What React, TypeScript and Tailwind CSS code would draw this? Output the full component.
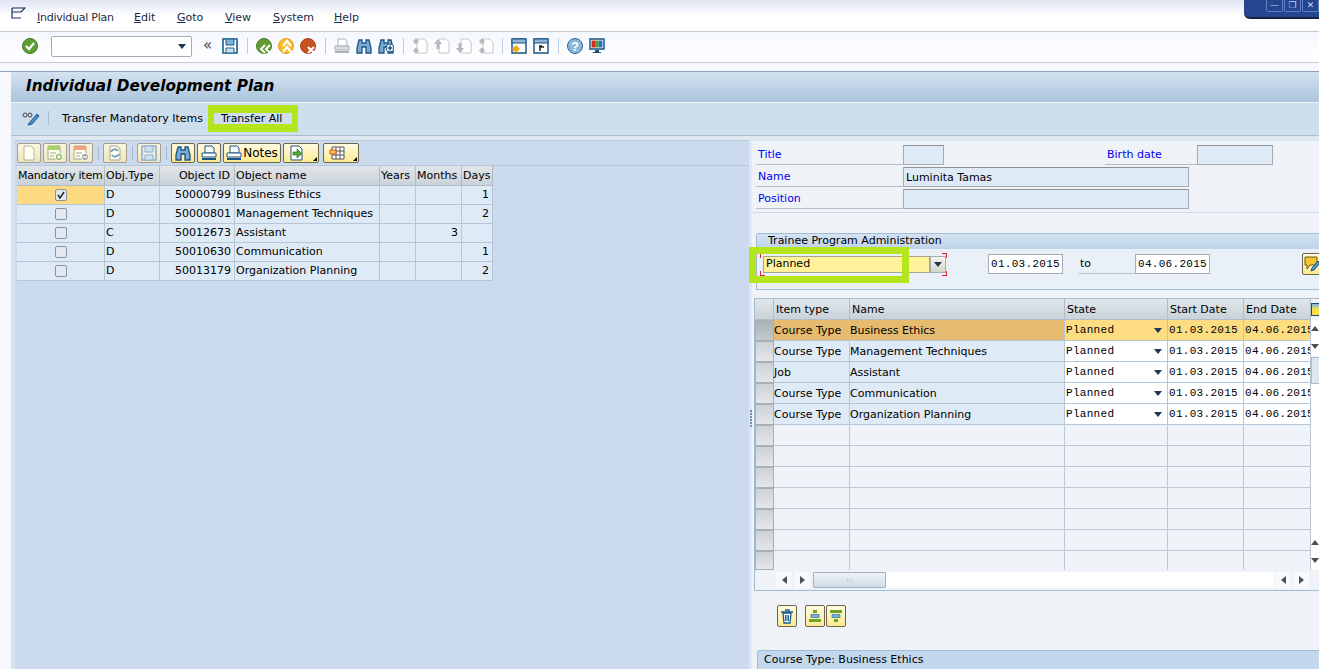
import type { ReactNode } from "react";

const ui = "font-['DejaVu_Sans',sans-serif] text-[11px] leading-none text-black";
const mono = "font-['Liberation_Mono',monospace] text-[11px] tracking-[0.3px]";

function Svg({ w = 16, h = 16, children }: { w?: number; h?: number; children: ReactNode }) {
  return (
    <svg width={w} height={h} viewBox={`0 0 ${w} ${h}`} className="shrink-0">
      {children}
    </svg>
  );
}

const CheckIcon = () => (
  <Svg>
    <circle cx="8" cy="8" r="7.5" fill="#5f9e34" stroke="#3f7a24" />
    <path d="M4 8l3 3 5-6" fill="none" stroke="#fff" strokeWidth="2.2" />
  </Svg>
);
const SaveIcon = ({ dim }: { dim?: boolean }) => {
  const c = dim ? "#8fb0c6" : "#17608f";
  return (
    <Svg>
      <path d="M1 1h14v14H1z" fill={dim ? "#e6eef0" : "#fff"} stroke={c} strokeWidth="1.6" />
      <path d="M4 1h8v6H4z" fill={dim ? "#cfe0e8" : "#7fb0d6"} stroke={c} />
      <path d="M4 10h8v5H4z" fill="#cfe0ee" stroke={c} />
    </Svg>
  );
};
const Round = ({ fill, edge, mark }: { fill: string; edge: string; mark: ReactNode }) => (
  <Svg>
    <circle cx="8" cy="8" r="7.5" fill={fill} stroke={edge} />
    {mark}
  </Svg>
);
const BackIcon = () => (
  <Round
    fill="#5f9b2f"
    edge="#4a7f24"
    mark={<path d="M9 7l-4 4 4 4M14 7l-4 4 4 4" fill="none" stroke="#fff" strokeWidth="2" />}
  />
);
const UpIcon = () => (
  <Round
    fill="#f7bd2c"
    edge="#e79a17"
    mark={<path d="M5 8l4-5 4 5M5 14l4-5 4 5" fill="none" stroke="#fff" strokeWidth="2.2" />}
  />
);
const CancelIcon = () => (
  <Round
    fill="#c9511f"
    edge="#a83f16"
    mark={<path d="M8 9l6 6M14 9l-6 6" fill="none" stroke="#fff" strokeWidth="2.2" />}
  />
);
const PrintIcon = ({ c = "#a9b2b8", fill = "#d9dee1" }: { c?: string; fill?: string }) => (
  <Svg>
    <path d="M4 1h7l2 2v5H4z" fill="#fff" stroke={c} />
    <path d="M1 8h14v4H1z" fill={fill} stroke={c} />
    <path d="M1 13h14v2H1z" fill={c} />
  </Svg>
);
const BinocIcon = ({ plus }: { plus?: boolean }) => (
  <Svg>
    <path
      d="M3 2h3v3h4V2h3l2 8v5h-5V9H6v6H1v-5z"
      fill="#7daad2"
      stroke="#1a5488"
      strokeWidth="1.3"
    />
    {plus && (
      <>
        <circle cx="12" cy="10" r="4" fill="#fff" stroke="#1a5488" />
        <path d="M9.5 10h5M12 7.5v5" stroke="#1a5488" strokeWidth="1.5" />
      </>
    )}
  </Svg>
);
const PageArrow = ({ d }: { d: string }) => (
  <Svg>
    <path d="M5 1h7l3 3v11H5z" fill="#fff" stroke="#c4c8cb" />
    <path d={d} fill="#b4b9bd" />
  </Svg>
);
const WindowIcon = ({ sun }: { sun?: boolean }) => (
  <Svg>
    <path d="M1 1h14v14H1z" fill="#fff" stroke="#17507f" strokeWidth="1.4" />
    <path d="M1 1h14v4H1z" fill="#8fb6d8" stroke="#17507f" />
    {sun ? (
      <>
        <circle cx="5" cy="11" r="3" fill="#f6a81d" />
        <path d="M1 11h8M5 7v8" stroke="#f6a81d" />
      </>
    ) : (
      <path d="M7 13V9h4M6 8l3 0" fill="none" stroke="#222" strokeWidth="1.5" />
    )}
  </Svg>
);
const HelpIcon = () => (
  <div className="flex h-4 w-4 items-center justify-center rounded-full border border-[#27679b] bg-[#8cb7da] font-['Liberation_Sans',sans-serif] text-[13px] font-bold text-white">
    ?
  </div>
);
const MonitorIcon = () => (
  <Svg>
    <path d="M1 1h14v10H1z" fill="#fff" stroke="#17507f" strokeWidth="1.4" />
    <path d="M2.5 2.5h3.6v7H2.5z" fill="#d42a20" />
    <path d="M6.1 2.5h3.6v7H6.1z" fill="#4e9f2c" />
    <path d="M9.7 2.5h3.8v7H9.7z" fill="#2b73c4" />
    <path d="M6 12h4v2h2v1H4v-1h2z" fill="#17507f" />
  </Svg>
);
const Sep = () => <div className="mx-[3px] h-4 w-px shrink-0 bg-[#b9cde2]" />;
const ToolSep = () => <div className="ml-[3px] mr-[2px] h-[14px] w-px shrink-0 bg-[#aab6c4]" />;

const NewDoc = () => (
  <Svg>
    <path d="M3 1h7l3 3v11H3z" fill="#fffef2" stroke="#b7b39a" />
  </Svg>
);
const RowEdit = ({ top, plus }: { top: string; plus?: boolean }) => (
  <Svg>
    <path d="M1 1h12v13H1z" fill="#fffef2" stroke="#a6a487" />
    <path d="M1 1h12v4H1z" fill={top} />
    <path d="M3 8h6M3 11h4" stroke="#a6a487" />
    <circle cx="12" cy="12" r="3.6" fill={plus ? "#7cb24a" : "#a2a398"} stroke="#fff" />
    <path d="M10 12h4" stroke="#fff" strokeWidth="1.4" />
    {plus && <path d="M12 10v4" stroke="#fff" strokeWidth="1.4" />}
  </Svg>
);
const RefreshIcon = () => (
  <Svg>
    <path d="M3 1h7l3 3v11H3z" fill="#fffef2" stroke="#a6a487" />
    <path d="M4 7a4 4 0 017-1M12 9a4 4 0 01-7 1" fill="none" stroke="#7b9fbd" strokeWidth="2" />
  </Svg>
);

function YBtn({ children, w = 24, h = 20, dim }: { children: ReactNode; w?: number; h?: number; dim?: boolean }) {
  return (
    <div
      style={{ width: w, height: h }}
      className={`flex shrink-0 items-center justify-center rounded-[2px] border bg-linear-to-b ${
        dim
          ? "border-[#a59f8d] from-[#fbf7de] to-[#ece5bf]"
          : "border-[#6b6650] from-[#fffbe0] to-[#fee98f]"
      }`}
    >
      {children}
    </div>
  );
}

function Corner() {
  return <div className="absolute right-[2px] bottom-[2px] h-0 w-0 border-b-[4px] border-l-[4px] border-b-black border-l-transparent" />;
}

const DownTri = () => <div className="h-0 w-0 border-x-[4px] border-t-[5px] border-x-transparent border-t-[#1d3557]" />;

const leftCols = [88, 55, 75, 145, 36, 46, 31];
const leftHead = ["Mandatory item", "Obj.Type", "Object ID", "Object name", "Years", "Months", "Days"];
const leftRows = [
  ["D", "50000799", "Business Ethics", "", "", "1"],
  ["D", "50000801", "Management Techniques", "", "", "2"],
  ["C", "50012673", "Assistant", "", "3", ""],
  ["D", "50010630", "Communication", "", "", "1"],
  ["D", "50013179", "Organization Planning", "", "", "2"],
];

const rightRows = [
  ["Course Type", "Business Ethics"],
  ["Course Type", "Management Techniques"],
  ["Job", "Assistant"],
  ["Course Type", "Communication"],
  ["Course Type", "Organization Planning"],
];
const rightCols = [76, 215, 103, 76, 67];
const empties = [0, 1, 2, 3, 4, 5, 6];

function Checkbox({ on }: { on?: boolean }) {
  return (
    <div className="flex h-3 w-3 items-center justify-center rounded-[2px] border border-[#8d9296] bg-[#e3e9f0]">
      {on && (
        <svg width="10" height="10" viewBox="0 0 10 10">
          <path d="M2 5l2 3 4-6" fill="none" stroke="#222" strokeWidth="1.4" />
        </svg>
      )}
    </div>
  );
}

function LeftTable() {
  return (
    <div className="ml-[2px] w-[476px]">
      <div className="flex h-5">
        {leftHead.map((h, i) => (
          <div
            key={h}
            style={{ width: leftCols[i] }}
            className={`flex shrink-0 items-center overflow-hidden whitespace-nowrap border-r border-b border-[#b0bcc6] bg-linear-to-b from-[#e1e6ea] to-[#c9d2d9] pl-px ${
              i === 0 ? "tracking-[-0.2px]" : ""
            } ${i === 2 ? "justify-end pr-1" : ""}`}
          >
            {h}
          </div>
        ))}
      </div>
      {leftRows.map((r, ri) => (
        <div key={r[1]} className="flex h-[19px]">
          <div
            style={{ width: leftCols[0] }}
            className={`flex shrink-0 items-center justify-center border-r border-b border-[#b5c6d6] ${
              ri === 0 ? "bg-[#fedb80]" : "bg-[#deeaf6]"
            }`}
          >
            <Checkbox on={ri === 0} />
          </div>
          {r.map((c, i) => (
            <div
              key={i}
              style={{ width: leftCols[i + 1] }}
              className={`flex shrink-0 items-center whitespace-nowrap border-r border-b border-[#b5c6d6] bg-[#deeaf6] pb-[2px] pl-px pr-[3px] ${
                i === 1 || i > 2 ? "justify-end" : ""
              }`}
            >
              {c}
            </div>
          ))}
        </div>
      ))}
    </div>
  );
}

function FieldRow({
  label,
  value,
  w,
  extra,
}: {
  label: string;
  value?: string;
  w: number;
  extra?: ReactNode;
}) {
  return (
    <div className="flex h-5 items-end pl-1">
      <div className="flex h-5 w-[147px] shrink-0 items-center border-b border-[#b5bec6] pl-[2px] text-[#0000ee]">
        {label}
      </div>
      <Field w={w}>{value}</Field>
      {extra}
    </div>
  );
}

function Field({ w, children }: { w: number; children?: ReactNode }) {
  return (
    <div
      style={{ width: w }}
      className="flex h-5 shrink-0 items-center border border-[#a5acb2] border-t-[#8b9298] bg-[#deeaf6] pl-[2px]"
    >
      {children}
    </div>
  );
}

function DateField({ children }: { children: ReactNode }) {
  return (
    <div className={`flex h-5 w-[75px] shrink-0 items-center justify-center border border-[#a5acb2] bg-white ${mono}`}>
      {children}
    </div>
  );
}

function RightTable() {
  return (
    <div className="ml-[2px] mt-2 h-[293px] shrink-0 overflow-hidden border border-r-0 border-[#a3bcd6]">
      <div className="flex">
        <div className="w-[19px] shrink-0">
          <div className="h-[21px] border-r border-b border-[#b0bcc6] bg-linear-to-b from-[#e1e6ea] to-[#c9d2d9]" />
          {rightRows.concat(empties.map(() => ["", ""])).map((_, i) => (
            <div
              key={i}
              className={`border border-[#a8afb5] bg-linear-to-b ${i === 11 ? "h-[19px]" : "h-[21px]"} ${
                i === 0 ? "from-[#a9b2b9] to-[#c3cad0]" : "from-[#cdd2d6] to-[#e4e7e9]"
              }`}
            />
          ))}
        </div>
        <div className="w-[536px] shrink-0">
          <div className="flex h-[21px]">
            {["Item type", "Name", "State", "Start Date", "End Date"].map((h, i) => (
              <div
                key={h}
                style={{ width: rightCols[i] }}
                className="flex shrink-0 items-center border-r border-b border-[#b0bcc6] bg-linear-to-b from-[#e1e6ea] to-[#c9d2d9] px-[2px]"
              >
                {h}
              </div>
            ))}
          </div>
          {rightRows.map((r, i) => (
            <div key={r[1]} className="flex h-[21px]">
              {r.map((c, j) => (
                <div
                  key={j}
                  style={{ width: rightCols[j] }}
                  className={`flex shrink-0 items-center whitespace-nowrap border-r border-b border-[#b5c6d6] ${
                    i === 0 ? "bg-[#e6bb70]" : "bg-[#deeaf6]"
                  }`}
                >
                  {c}
                </div>
              ))}
              <div
                className={`flex w-[103px] shrink-0 items-center justify-between border-r border-b border-[#b5c6d6] pl-px pr-[5px] pt-px ${mono} ${
                  i === 0 ? "bg-[#fedd82]" : "bg-white"
                }`}
              >
                Planned
                <DownTri />
              </div>
              {["01.03.2015", "04.06.2015"].map((d, j) => (
                <div
                  key={d}
                  style={{ width: rightCols[j + 3] }}
                  className={`flex shrink-0 items-center overflow-hidden whitespace-nowrap border-r border-b border-[#b5c6d6] pl-px pt-px ${mono} ${
                    i === 0 ? "bg-[#fedd82]" : "bg-white"
                  }`}
                >
                  {d}
                </div>
              ))}
            </div>
          ))}
          {empties.map((i) => (
            <div key={i} className={`flex ${i === 6 ? "h-[19px]" : "h-[21px]"}`}>
              {rightCols.map((w, j) => (
                <div
                  key={j}
                  style={{ width: w }}
                  className={`shrink-0 border-r border-[#b9c8d6] ${i === 6 ? "" : "border-b"}`}
                />
              ))}
            </div>
          ))}
        </div>
        <VScroll />
      </div>
      <HScroll />
    </div>
  );
}

function VScroll() {
  return (
    <div className="flex w-[9px] shrink-0 flex-col pl-px">
      <div className="flex h-[21px] items-center">
        <div className="h-[13px] w-3 shrink-0 border border-[#17507f] bg-linear-to-b from-[#7fb0d6] via-[#fbe04a] to-[#fbe04a]" />
      </div>
      <div className="flex h-4 items-center justify-center bg-white">
        <div className="h-0 w-0 border-x-[4px] border-b-[5px] border-x-transparent border-b-[#4a5056]" />
      </div>
      <div className="flex h-5 items-center justify-center bg-white">
        <div className="h-0 w-0 border-x-[4px] border-t-[5px] border-x-transparent border-t-[#4a5056]" />
      </div>
      <div className="mt-px h-[27px] w-full border border-r-0 border-[#aebccb] bg-[#dce6ef]" />
      <div className="h-[150px] bg-white" />
      <div className="flex h-4 items-center justify-center bg-white">
        <div className="h-0 w-0 border-x-[4px] border-b-[5px] border-x-transparent border-b-[#4a5056]" />
      </div>
      <div className="flex h-5 items-center justify-center bg-white">
        <div className="h-0 w-0 border-x-[4px] border-t-[5px] border-x-transparent border-t-[#4a5056]" />
      </div>
    </div>
  );
}

const ArrowL = () => <div className="h-0 w-0 border-y-[4px] border-r-[5px] border-y-transparent border-r-[#4a5056]" />;
const ArrowR = () => <div className="h-0 w-0 border-y-[4px] border-l-[5px] border-y-transparent border-l-[#4a5056]" />;

function HScroll() {
  return (
    <div className="flex h-[20px] items-center pl-[21px]">
      <div className="flex h-4 w-[16px] items-center justify-center bg-[#f7f9fb]"><ArrowL /></div>
      <div className="ml-[2px] flex h-4 w-[16px] items-center justify-center bg-[#f7f9fb]"><ArrowR /></div>
      <div className="ml-[3px] flex h-4 flex-1 bg-white">
        <div className="flex h-[16px] w-[73px] items-center justify-center rounded-[1px] border border-[#9fb0c0] bg-linear-to-b from-[#eef3f8] to-[#cfdce8] text-[6px] text-[#7a8894]">
          :::
        </div>
      </div>
      <div className="ml-px flex h-4 w-[16px] items-center justify-center bg-[#f7f9fb]"><ArrowL /></div>
      <div className="ml-[2px] mr-[10px] flex h-4 w-[16px] items-center justify-center bg-[#f7f9fb]"><ArrowR /></div>
    </div>
  );
}

export default function App() {
  return (
    <div className={`relative flex h-[669px] w-[1319px] flex-col overflow-hidden bg-[#f7f8fd] ${ui}`}>
      {/* window buttons */}
      <div className="absolute top-0 right-0 z-20 flex h-[19px] w-[75px] items-start justify-end gap-px rounded-bl-[6px] border-b-2 border-[#16233f] bg-[#23468f]">
        {["—", "❐", "✕"].map((c) => (
          <div
            key={c}
            className="flex h-[12px] w-[17px] items-center justify-center rounded-b-[2px] border border-t-0 border-[#5f80c4] text-[9px] text-[#c8d8f5]"
          >
            {c}
          </div>
        ))}
      </div>

      {/* menu */}
      <div className="flex h-8 shrink-0 items-center border-b border-[#c3ccd6] bg-linear-to-b from-[#dfe5f3] via-white to-white pl-[10px] pt-[3px] text-[#1c2a44]">
        <svg width="16" height="16" viewBox="0 0 16 16" className="mb-[6px] mr-[11px]">
          <path d="M2 2v10h9M2 2h13l-4 4H2" fill="none" stroke="#17305e" strokeWidth="1.2" />
        </svg>
        <span className="w-[97px] tracking-[-0.25px]"><u>I</u>ndividual Plan</span>
        <span className="w-[43px]"><u>E</u>dit</span>
        <span className="w-[48px]"><u>G</u>oto</span>
        <span className="w-[48px]"><u>V</u>iew</span>
        <span className="w-[61px]"><u>S</u>ystem</span>
        <span><u>H</u>elp</span>
      </div>

      {/* system toolbar */}
      <div className="flex h-[31px] shrink-0 items-center border-b border-[#c3ccd6] bg-linear-to-b from-[#f4f7fe] to-white pb-[2px] pl-[22px]">
        <CheckIcon />
        <div className="ml-[13px] flex h-[21px] w-[141px] items-center justify-end rounded-[2px] border border-[#a8acb0] bg-white pr-[5px]">
          <DownTri />
        </div>
        <span className="ml-[11px] mr-[9px] mb-[2px] w-[10px] text-[15px] text-[#444]">«</span>
        <SaveIcon />
        <div className="ml-[6px]"><Sep /></div>
        <div className="ml-[5px] flex items-center gap-[6px]">
          <BackIcon />
          <UpIcon />
          <CancelIcon />
        </div>
        <div className="ml-[6px]"><Sep /></div>
        <div className="ml-[5px] flex items-center gap-[6px]">
          <PrintIcon />
          <BinocIcon />
          <BinocIcon plus />
        </div>
        <div className="ml-[6px]"><Sep /></div>
        <div className="ml-[5px] flex items-center gap-[6px]">
          <PageArrow d="M4 0l3.500 4H5.500v2h-3V4H.5zM2.500 10h3v2h2L4 16 .5 12h2z" />
          <PageArrow d="M4 1l4 5H5.500v5h-3V6H0z" />
          <PageArrow d="M2.500 5h3v5H8l-4 5-4-5h2.500z" />
          <PageArrow d="M4 0l3.500 4H5.500v2h-3V4H.5zM2.500 10h3v2h2L4 16 .5 12h2z" />
        </div>
        <div className="ml-[5px]"><Sep /></div>
        <div className="ml-[5px] flex items-center gap-[6px]">
          <WindowIcon sun />
          <WindowIcon />
        </div>
        <div className="ml-[6px]"><Sep /></div>
        <div className="ml-[5px] flex items-center gap-[6px]">
          <HelpIcon />
          <MonitorIcon />
        </div>
      </div>

      <div className="h-[9px] shrink-0 border-b border-[#8f9dbb]" />

      <div className="flex min-h-0 flex-1 flex-col pl-[11px]">
        <div className="flex h-[31px] shrink-0 items-center border-b border-[#eef3f8] bg-linear-to-b from-[#d3e2f1] to-[#abc4dc] pl-[15px] font-['DejaVu_Sans',sans-serif] text-[15.3px] font-bold italic">
          Individual Development Plan
        </div>
        <div className="flex h-[33px] shrink-0 items-center border-b border-[#aebccb] bg-[#cddeee] pb-[2px] pl-[11px]">
          <svg width="18" height="16" viewBox="0 0 18 16">
            <circle cx="3" cy="5" r="2" fill="none" stroke="#444" />
            <circle cx="8" cy="5" r="2" fill="none" stroke="#444" />
            <path d="M6 15l2-3 7-8 2 2-7 8z" fill="#4f93cf" stroke="#1a5488" />
          </svg>
          <div className="ml-2 mr-[13px] h-[14px] w-px bg-[#aebccb]" />
          <span className="whitespace-nowrap">Transfer Mandatory Items</span>
          <span className="ml-[18px] whitespace-nowrap">Transfer All</span>
        </div>

        <div className="flex min-h-0 flex-1 bg-[#dfe7f1]">
          {/* left panel */}
          <div className="w-[4px] shrink-0 bg-[#d5e2f0]" />
          <div className="mt-1 flex w-[734px] shrink-0 flex-col border-t border-[#b5c8dc] bg-[#ccdaed]">
            <div className="flex h-[25px] shrink-0 items-center gap-[2px] border-b border-[#b5c8dc] pl-[2px]">
              <YBtn dim><NewDoc /></YBtn>
              <YBtn dim><RowEdit top="#a9d06a" plus /></YBtn>
              <YBtn dim><RowEdit top="#f0a57c" /></YBtn>
              <ToolSep />
              <YBtn dim><RefreshIcon /></YBtn>
              <ToolSep />
              <YBtn dim><SaveIcon dim /></YBtn>
              <ToolSep />
              <YBtn><BinocIcon /></YBtn>
              <YBtn><PrintIcon c="#1a5488" fill="#fff" /></YBtn>
              <YBtn w={58}>
                <div className="flex items-center gap-px text-[12px]"><PrintIcon c="#1a5488" fill="#fff" />Notes</div>
              </YBtn>
              <div className="relative">
                <YBtn w={36}>
                  <div className="-ml-2">
                    <Svg>
                      <path d="M2 1h8l3 3v11H2z" fill="#fff" stroke="#1a5488" />
                      <path d="M4 7h4V4l5 4.500-5 4.500v-3H4z" fill="#58a52f" stroke="#2e6b18" strokeWidth="0.6" />
                    </Svg>
                  </div>
                </YBtn>
                <Corner />
              </div>
              <div className="relative ml-[2px]">
                <YBtn w={36}>
                  <div className="-ml-2">
                    <Svg>
                      <path d="M3 2h12v12H3zM3 6h12M3 10h12M7 2v12M11 2v12" fill="#fff" stroke="#555" />
                      <path d="M1 5h6v4H1z" fill="#f7c948" stroke="#e0502a" />
                    </Svg>
                  </div>
                </YBtn>
                <Corner />
              </div>
            </div>
            <LeftTable />
          </div>

          {/* sash */}
          <div className="flex w-[3px] shrink-0 flex-col items-center justify-center gap-px bg-[#dfe7f1] pt-[32px]">
            {[0, 1, 2, 3, 4, 5].map((i) => (
              <div key={i} className="h-[2px] w-[2px] bg-[#7e8c9a]" />
            ))}
          </div>

          {/* right panel */}
          <div className="flex min-w-0 flex-1 flex-col bg-[#eff3f8]">
            <div className="h-[5px] shrink-0 bg-[#dfe7f1]" />
            <div className="flex h-[72px] shrink-0 flex-col gap-[2px] border-b border-[#cfdbe8] pt-1">
              <FieldRow
                label="Title"
                w={41}
                extra={
                  <>
                    <div className="ml-[161px] flex h-5 w-[92px] shrink-0 items-center border-b border-[#b5bec6] pl-[2px] text-[#0000ee]">
                      Birth date
                    </div>
                    <Field w={76} />
                  </>
                }
              />
              <FieldRow label="Name" value="Luminita Tamas" w={286} />
              <FieldRow label="Position" w={286} />
            </div>

            <div className="ml-1 mt-5 h-[57px] shrink-0 overflow-hidden rounded-tl-[3px] border border-r-0 border-[#a3bcd6] bg-[#e9f0f7]">
              <div className="flex h-[15px] items-center bg-linear-to-b from-[#d5e3f2] to-[#bdd3ea] pb-[2px] pl-[11px]">
                Trainee Program Administration
              </div>
              <div className="flex items-start pt-[5px]">
                <div className="relative ml-[6px] mt-[2px] flex h-[17px] w-[183px] shrink-0">
                  <div className="flex h-full w-[167px] items-center border border-[#a8a690] bg-[#fff29b] pb-[2px] pl-[2px]">Planned</div>
                  <div className="flex h-full w-4 items-center justify-center border border-[#a5acb2] bg-linear-to-b from-[#f6f6ec] to-[#d6d6c8]">
                    <DownTri />
                  </div>
                  <div className="absolute -top-[3px] -left-[3px] h-[5px] w-[5px] border-t border-l border-[#e0202a]" />
                  <div className="absolute -top-[3px] -right-px h-[5px] w-[5px] border-t border-r border-[#e0202a]" />
                  <div className="absolute -bottom-[3px] -left-[3px] h-[5px] w-[5px] border-b border-l border-[#e0202a]" />
                  <div className="absolute -bottom-[3px] -right-px h-[5px] w-[5px] border-b border-r border-[#e0202a]" />
                </div>
                <div className="ml-[42px] flex items-center">
                  <DateField>01.03.2015</DateField>
                  <div className="ml-4 flex h-5 w-[56px] items-center border-b border-[#b5bec6] pl-px">to</div>
                  <DateField>04.06.2015</DateField>
                </div>
                <div className="ml-[92px] -mt-px">
                  <YBtn w={24} h={22}>
                    <svg width="16" height="16" viewBox="0 0 16 16" className="-ml-1">
                      <path d="M1 1h12v8H6l-3 4v-4H1z" fill="#f5c431" stroke="#6b5a10" />
                      <path d="M7 15l1-3 6-7 2 2-6 7z" fill="#4f93cf" stroke="#1a5488" />
                    </svg>
                  </YBtn>
                </div>
              </div>
            </div>

            <RightTable />

            <div className="ml-[25px] mt-[14px] flex shrink-0 items-center">
              <YBtn w={20} h={22}>
                <Svg>
                  <path d="M4 5h8l-1 10H5zM2 4h12M6 2h4v2" fill="#fff" stroke="#17608f" strokeWidth="1.3" />
                  <path d="M6.500 7v6M8 7v6M9.500 7v6" stroke="#17608f" />
                </Svg>
              </YBtn>
              <div className="ml-2"><YBtn w={20} h={22}>
                <Svg>
                  <path d="M6 2h4v3H6z" fill="#6fa32a" />
                  <path d="M4 6.500h8v3H4z" fill="#7fb0d6" stroke="#17608f" strokeWidth="0.6" />
                  <path d="M2 11h12v3H2z" fill="#6fa32a" />
                </Svg>
              </YBtn></div>
              <div className="ml-px"><YBtn w={20} h={22}>
                <Svg>
                  <path d="M2 2h12v3H2z" fill="#6fa32a" />
                  <path d="M4 6.500h8v3H4z" fill="#7fb0d6" stroke="#17608f" strokeWidth="0.6" />
                  <path d="M6 11h4v3H6z" fill="#6fa32a" />
                </Svg>
              </YBtn></div>
            </div>

            <div className="ml-[5px] mt-[23px] flex h-5 shrink-0 items-center rounded-tl-[3px] border-t border-l border-[#a3bcd6] bg-[#c3d8ed] pb-[3px] pl-[6px]">
              Course Type: Business Ethics
            </div>
          </div>
        </div>
      </div>

      {/* green highlight marks */}
      <div className="pointer-events-none absolute top-[105px] left-[208px] h-[27px] w-[90px] border-x-[6px] border-y-[8px] border-[#b5e61d]" />
      <div className="pointer-events-none absolute top-[247px] left-[749px] h-[36px] w-[160px] border-[7px] border-[#b5e61d]" />
    </div>
  );
}
